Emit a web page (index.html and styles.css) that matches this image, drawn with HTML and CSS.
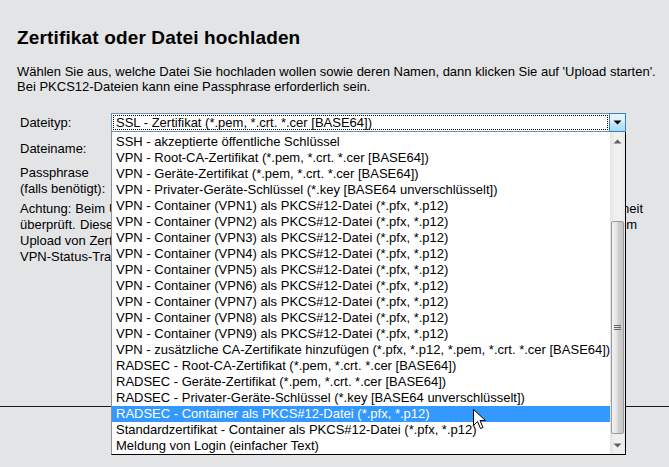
FILE: index.html
```html
<!DOCTYPE html>
<html lang="de">
<head>
<meta charset="utf-8">
<title>Zertifikat oder Datei hochladen</title>
<link rel="stylesheet" href="styles.css">
</head>
<body>
<div class="page">
  <h1 class="title">Zertifikat oder Datei hochladen</h1>
  <p class="intro">Wählen Sie aus, welche Datei Sie hochladen wollen sowie deren Namen, dann klicken Sie auf 'Upload starten'.<br>Bei PKCS12-Dateien kann eine Passphrase erforderlich sein.</p>
  <div class="form">
    <div class="row row-type">
      <span class="label">Dateityp:</span>
      <div class="select">
        <span class="select-value"><span class="focus">SSL - Zertifikat (*.pem, *.crt. *.cer [BASE64])</span></span>
        <span class="select-btn"><svg width="9" height="5" viewBox="0 0 9 5"><path d="M0.5 0.5h8l-4 4z" fill="#000"/></svg></span>
        <div class="dropdown">
          <ul class="options">
            <li>SSH - akzeptierte öffentliche Schlüssel</li>
            <li>VPN - Root-CA-Zertifikat (*.pem, *.crt. *.cer [BASE64])</li>
            <li>VPN - Geräte-Zertifikat (*.pem, *.crt. *.cer [BASE64])</li>
            <li>VPN - Privater-Geräte-Schlüssel (*.key [BASE64 unverschlüsselt])</li>
            <li>VPN - Container (VPN1) als PKCS#12-Datei (*.pfx, *.p12)</li>
            <li>VPN - Container (VPN2) als PKCS#12-Datei (*.pfx, *.p12)</li>
            <li>VPN - Container (VPN3) als PKCS#12-Datei (*.pfx, *.p12)</li>
            <li>VPN - Container (VPN4) als PKCS#12-Datei (*.pfx, *.p12)</li>
            <li>VPN - Container (VPN5) als PKCS#12-Datei (*.pfx, *.p12)</li>
            <li>VPN - Container (VPN6) als PKCS#12-Datei (*.pfx, *.p12)</li>
            <li>VPN - Container (VPN7) als PKCS#12-Datei (*.pfx, *.p12)</li>
            <li>VPN - Container (VPN8) als PKCS#12-Datei (*.pfx, *.p12)</li>
            <li>VPN - Container (VPN9) als PKCS#12-Datei (*.pfx, *.p12)</li>
            <li>VPN - zusätzliche CA-Zertifikate hinzufügen (*.pfx, *.p12, *.pem, *.crt. *.cer [BASE64])</li>
            <li>RADSEC - Root-CA-Zertifikat (*.pem, *.crt. *.cer [BASE64])</li>
            <li>RADSEC - Geräte-Zertifikat (*.pem, *.crt. *.cer [BASE64])</li>
            <li>RADSEC - Privater-Geräte-Schlüssel (*.key [BASE64 unverschlüsselt])</li>
            <li class="selected">RADSEC - Container als PKCS#12-Datei (*.pfx, *.p12)</li>
            <li>Standardzertifikat - Container als PKCS#12-Datei (*.pfx, *.p12)</li>
            <li>Meldung von Login (einfacher Text)</li>
          </ul>
          <div class="scrollbar">
            <span class="sb-btn"><svg width="9" height="5" viewBox="0 0 9 5"><path d="M4.5 0.5l4 4h-8z" fill="#606060"/></svg></span>
            <span class="sb-space-top"></span>
            <span class="sb-thumb"><span class="grip"></span></span>
            <span class="sb-space-bottom"></span>
            <span class="sb-btn sb-down"><svg width="9" height="5" viewBox="0 0 9 5"><path d="M0.5 0.5h8l-4 4z" fill="#606060"/></svg></span>
          </div>
          <svg class="cursor" width="13" height="21" viewBox="0 0 13 21"><path d="M0.5 0.5v16l4-4 3 7 2.5-1-3-7h5.5z" fill="#fff" stroke="#000" stroke-width="1" stroke-linejoin="round"/></svg>
        </div>
      </div>
    </div>
    <div class="row row-name">
      <span class="label">Dateiname:</span>
    </div>
    <div class="row row-pass">
      <span class="label">Passphrase<br>(falls benötigt):</span>
    </div>
    <div class="note">
      <span class="note-line note-l1">Achtung: Beim Upload wird nur das Dateiformat geprüft, die Zertifikate selbst werden nicht auf ihre Echtheit</span>
      <span class="note-line note-l2">überprüft. Diese Prüfung muss vom Anwender selbst erfolgen. Nach dem Upload erscheint der Eintrag im</span>
      <span class="note-line">Upload von Zertifikaten für VPN-Verbindungen muss die Verbindung neu gestartet werden (siehe</span>
      <span class="note-line">VPN-Status-Tracing).</span>
    </div>
  </div>
</div>
<div class="rule"></div>
</body>
</html>
```
FILE: styles.css
```css
html, body {
  margin: 0;
  padding: 0;
}
body {
  background: #e3e4e6;
  color: #000;
  font-family: "Liberation Sans", Arial, sans-serif;
  font-size: 13px;
  overflow: hidden;
  height: 467px;
}
.page {
  padding: 27px 0 0 17px;
}
.title {
  margin: 0;
  font-size: 19px;
  letter-spacing: 0.15px;
  line-height: 22px;
  font-weight: 700;
}
.intro {
  margin: 15px 0 0;
  line-height: 15px;
  white-space: nowrap;
}
.form {
  margin-top: 19px;
  padding-left: 3px;
}
.row {
  display: grid;
  grid-template-columns: 91px 515px;
}
.label {
  line-height: 16px;
  white-space: nowrap;
}
.row-type .label {
  line-height: 19px;
}
.row-name {
  margin-top: 9px;
}
.row-pass {
  margin-top: 8px;
}
.note {
  margin: 4px 0 0;
  line-height: 16px;
  white-space: nowrap;
}
.note-line {
  display: block;
}
.note-l1 {
  width: 623px;
  text-align: justify;
  text-align-last: justify;
}
.note-l2 {
  width: 617px;
  text-align: justify;
  text-align-last: justify;
}
.select {
  position: relative;
  height: 19px;
  box-sizing: border-box;
  border: 1px solid #6b8fb5;
  background: #fff;
  display: flex;
}
.select-value {
  flex: 1;
  display: flex;
  padding: 1px;
}
.focus {
  flex: 1;
  outline: 1px dotted #000;
  outline-offset: -1px;
  line-height: 15px;
  padding-left: 3px;
  white-space: nowrap;
  overflow: hidden;
}
.select-btn {
  width: 17px;
  box-sizing: border-box;
  margin: -1px -1px -1px 0;
  height: 19px;
  border: 1px solid #3c7fb1;
  border-radius: 1px;
  background: linear-gradient(#eaf6fd 0%, #d9f0fc 45%, #bee6fd 55%, #a7d9f5 100%);
  display: flex;
  align-items: center;
  justify-content: center;
}
.dropdown {
  position: absolute;
  left: -1px;
  top: 18px;
  width: 515px;
  height: 323px;
  box-sizing: border-box;
  background: #fff;
  border-left: 1px solid #8e8f8f;
  border-right: 1px solid #000;
  border-bottom: 1px solid #000;
  display: flex;
}
.options {
  list-style: none;
  margin: 0;
  padding: 2px 0 0;
  flex: 1;
}
.options li {
  height: 16px;
  line-height: 16px;
  padding-left: 4px;
  white-space: nowrap;
}
.options li.selected {
  background: #3399ff;
  color: #fff;
}
.scrollbar {
  width: 17px;
  display: flex;
  flex-direction: column;
  background: linear-gradient(90deg, #e3e3e3, #f0f0f0 30%, #f0f0f0 70%, #e8e8e8);
}
.sb-btn {
  height: 18px;
  display: flex;
  align-items: center;
  justify-content: center;
}
.sb-down {
  height: 17px;
}
.sb-space-top {
  height: 71px;
}
.sb-thumb {
  height: 213px;
  margin: 0 1px;
  box-sizing: border-box;
  border: 1px solid #9a9a9a;
  border-radius: 2px;
  background: linear-gradient(90deg, #f2f2f2 0%, #e4e4e4 45%, #cfcfcf 55%, #c6c6c6 100%);
  display: flex;
  align-items: center;
  justify-content: center;
}
.grip {
  width: 7px;
  height: 5px;
  background: linear-gradient(#666 0 1px, transparent 1px 2px, #666 2px 3px, transparent 3px 4px, #666 4px 5px);
}
.sb-space-bottom {
  height: 3px;
}
.cursor {
  position: absolute;
  left: 361px;
  top: 277px;
}
.rule {
  margin-top: 141px;
  height: 1px;
  background: #1a1a1a;
}
```
